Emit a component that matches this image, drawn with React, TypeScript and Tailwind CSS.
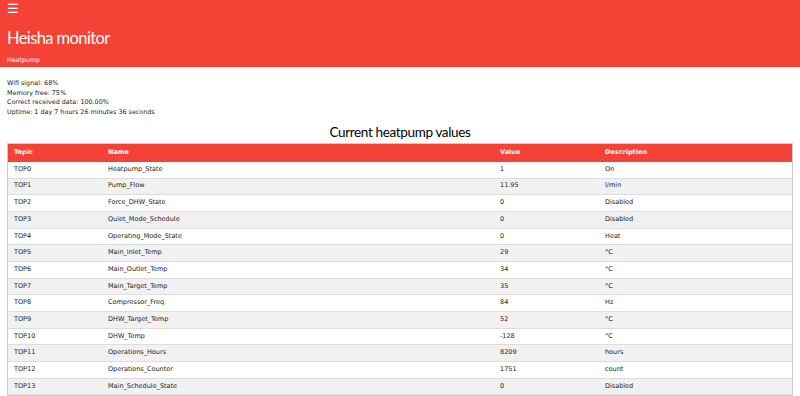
const rows: [string, string, string, string][] = [
  ['TOP0', 'Heatpump_State', '1', 'On'],
  ['TOP1', 'Pump_Flow', '11.95', 'l/min'],
  ['TOP2', 'Force_DHW_State', '0', 'Disabled'],
  ['TOP3', 'Quiet_Mode_Schedule', '0', 'Disabled'],
  ['TOP4', 'Operating_Mode_State', '0', 'Heat'],
  ['TOP5', 'Main_Inlet_Temp', '29', '°C'],
  ['TOP6', 'Main_Outlet_Temp', '34', '°C'],
  ['TOP7', 'Main_Target_Temp', '35', '°C'],
  ['TOP8', 'Compressor_Freq', '84', 'Hz'],
  ['TOP9', 'DHW_Target_Temp', '52', '°C'],
  ['TOP10', 'DHW_Temp', '-128', '°C'],
  ['TOP11', 'Operations_Hours', '8209', 'hours'],
  ['TOP12', 'Operations_Counter', '1751', 'count'],
  ['TOP13', 'Main_Schedule_State', '0', 'Disabled'],
]

export default function App() {
  return (
    <div className="w-[800px] h-[396px] overflow-hidden bg-white text-[#222]" style={{ fontFamily: '"DejaVu Sans", Verdana, sans-serif' }}>
      <div className="bg-[#f44336] text-white h-[67px] px-[7px]">
        <div className="pt-[1px] text-[13px] leading-[16px]">☰</div>
        <h1 className="mt-[10px] text-[16.5px] leading-[22px] tracking-[-0.6px]" style={{ fontFamily: 'Lato, sans-serif' }}>Heisha monitor</h1>
        <div className="mt-[6px] text-[6.3px] leading-[10px]">Heatpump</div>
      </div>

      <div className="px-[7px] pt-[12px] text-[6.4px] leading-[9.7px]">
        <div>Wifi signal: 68%</div>
        <div>Memory free: 75%</div>
        <div>Correct received data: 100.00%</div>
        <div>Uptime: 1 day 7 hours 26 minutes 36 seconds</div>
      </div>

      <h2 className="mt-[5px] text-center text-[13.5px] leading-[18px] tracking-[-0.35px] text-black" style={{ fontFamily: 'Lato, sans-serif' }}>Current heatpump values</h2>

      <div className="mx-[7px] mt-[2px] border border-[#ccc]">
        <div className="grid grid-cols-[94px_392px_105px_1fr] bg-[#f44336] text-white font-bold text-[6.5px] h-[18px] items-center">
          <div className="pl-[6px]">Topic</div>
          <div className="pl-[6px]">Name</div>
          <div className="pl-[6px]">Value</div>
          <div className="pl-[6px]">Description</div>
        </div>
        {rows.map((r, i) => (
          <div
            key={r[0]}
            className={`grid grid-cols-[94px_392px_105px_1fr] text-[6.5px] h-[16.7px] items-center border-b border-[#ddd] ${i % 2 === 1 ? 'bg-[#f1f1f1]' : 'bg-white'}`}
          >
            <div className="pl-[6px]">{r[0]}</div>
            <div className="pl-[6px]">{r[1]}</div>
            <div className="pl-[6px]">{r[2]}</div>
            <div className="pl-[6px]">{r[3]}</div>
          </div>
        ))}
      </div>
    </div>
  )
}
